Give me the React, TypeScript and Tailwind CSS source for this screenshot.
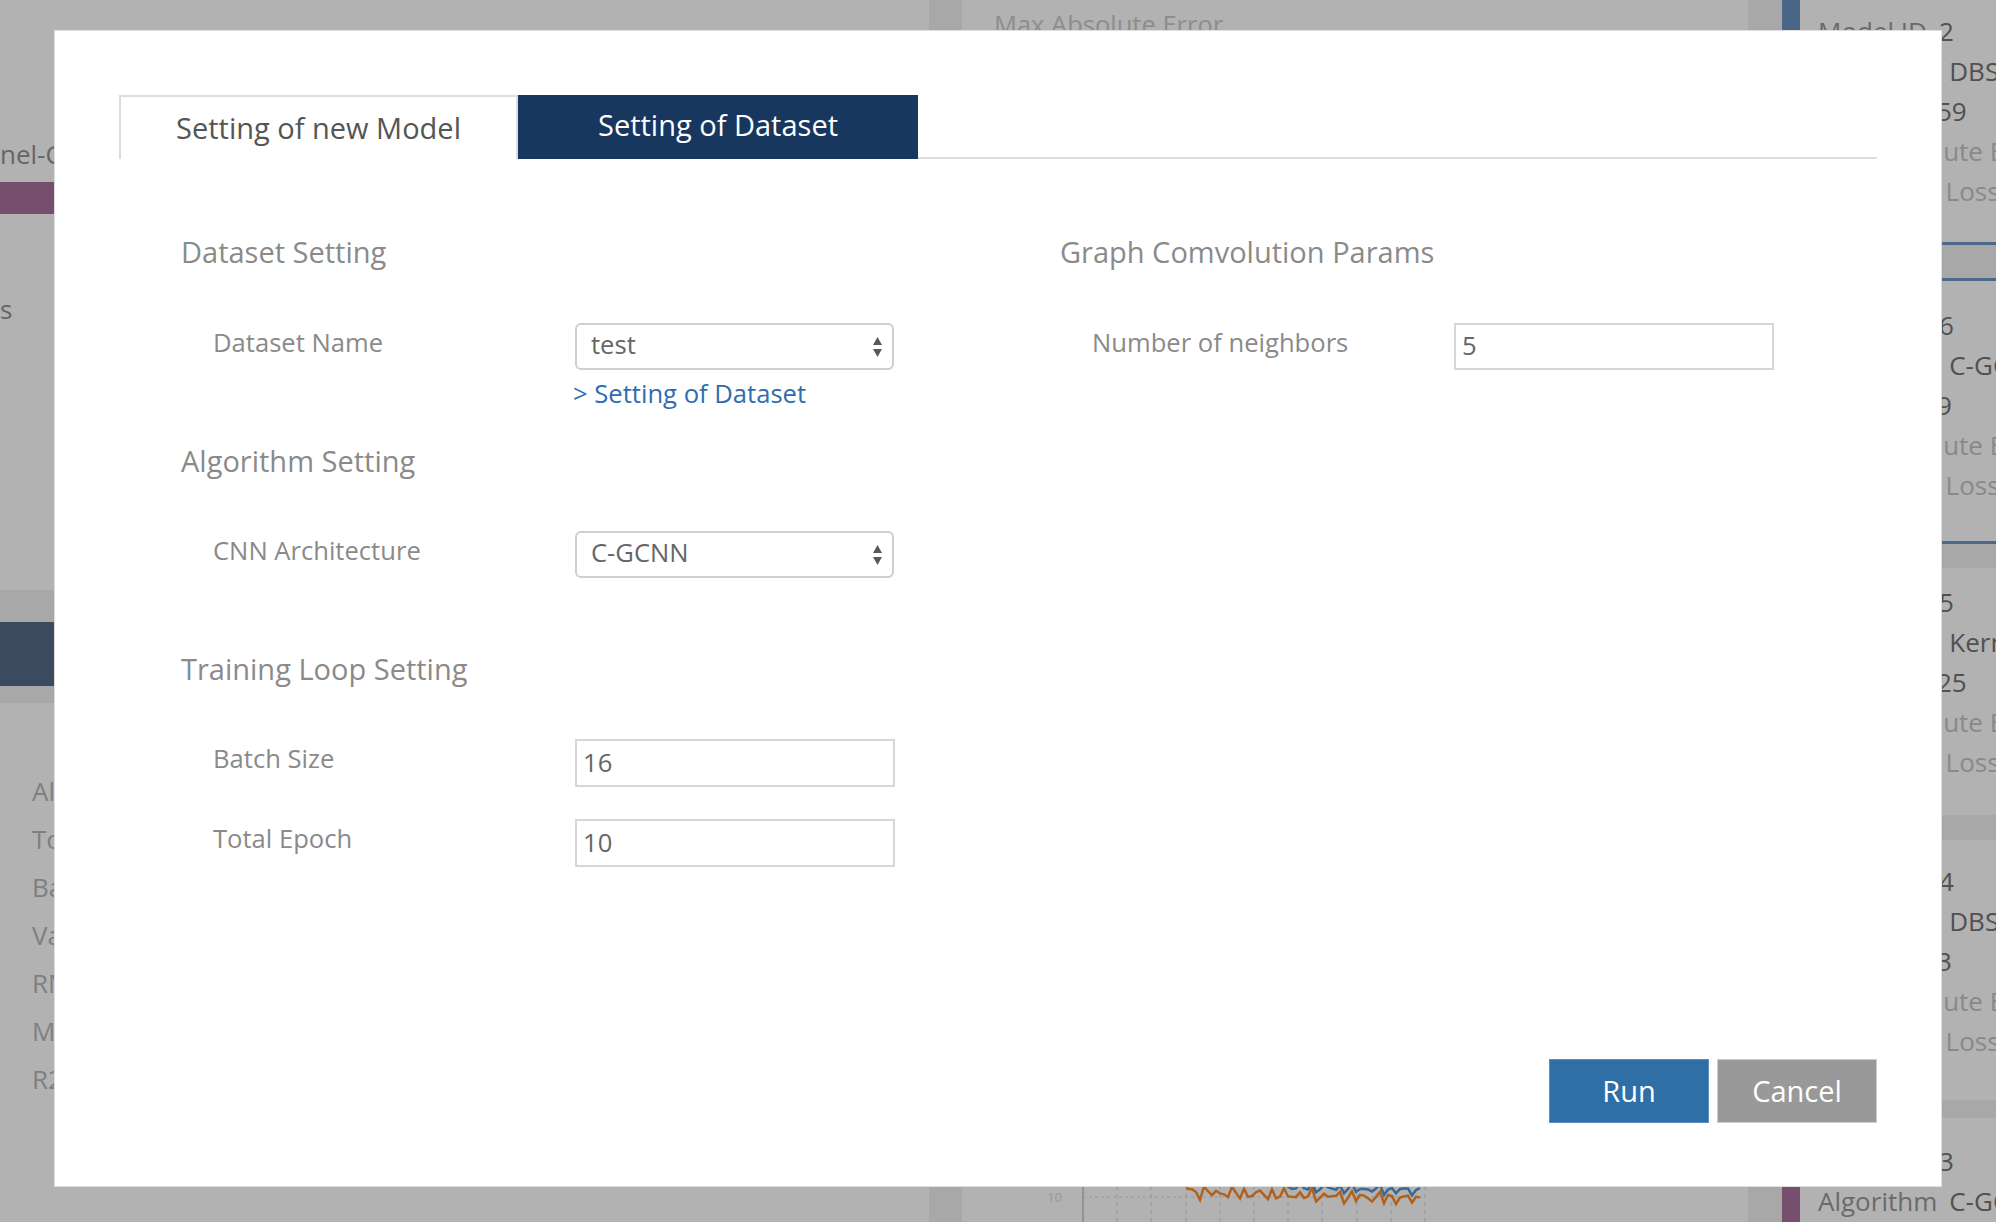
import React from 'react';

// jagged series for the training chart behind the dialog
const series = (x0: number, x1: number, step: number, f: (x: number, i: number) => number) => {
  const out: string[] = [];
  let i = 0;
  for (let x = x0; x <= x1; x += step, i++) out.push(`${x},${f(x, i).toFixed(1)}`);
  return out.join(' ');
};

const noise = (i: number, k: number) => 4 * Math.sin(i * 1.9 + k) + 3 * Math.sin(i * 3.7 + k * 2) + 1.5 * Math.sin(i * 7.3);

const orange = series(130, 458, 4, (x, i) => (x < 228 ? 110 + (x - 130) * 1.2 + noise(i, 1) : 230 + (x - 228) * 0.03 + noise(i, 1)));
const blue = series(150, 458, 4, (x, i) => (x < 330 ? 120 + (x - 150) * 0.58 + noise(i, 4) : 225 + (x - 330) * 0.03 + noise(i, 4) * 0.8));

const Card = ({
  bar,
  className,
  inner,
  rows,
}: {
  bar: string;
  className: string;
  inner: string;
  rows: [string, string, boolean?][];
}) => (
  <div className={`flex ${className}`}>
    <div className={`w-[18px] shrink-0 ${bar}`} />
    <div className={`flex-1 pl-[18px] ${inner}`}>
      {rows.map(([label, value, light]) => (
        <div key={label} className="flex gap-[12px] leading-[40px] text-[26px] whitespace-nowrap">
          <span className={`min-w-[107px] ${light ? 'text-[#c5c5c5]' : 'text-[#999]'}`}>{label}</span>
          <span className="text-[#747474]">{value}</span>
        </div>
      ))}
    </div>
  </div>
);

const Arrows = () => (
  <svg width="11" height="22" viewBox="0 0 11 22">
    <path d="M5.5 1 L10 9 H1 Z" fill="#5a5a5a" />
    <path d="M5.5 21 L10 13 H1 Z" fill="#5a5a5a" />
  </svg>
);

const Select = ({ value }: { value: string }) => (
  <div className="w-[319px] h-[47px] border-2 border-[#cfcfcf] rounded-[6px] bg-white flex items-center justify-between pl-[14px] pr-[9px]">
    <span className="pb-[3px] text-[25.6px] text-[#666]">{value}</span>
    <Arrows />
  </div>
);

const Input = ({ value, h = 'h-[48px]' }: { value: string; h?: string }) => (
  <div className={`w-[320px] ${h} border-2 border-[#d6d6d6] bg-white flex items-center pl-[6px]`}>
    <span className="text-[25.6px] text-[#666]">{value}</span>
  </div>
);

const Field = ({ label, children, className = '' }: { label: string; children: React.ReactNode; className?: string }) => (
  <div className={`flex items-start ${className}`}>
    <div className="w-[394px] pl-8 text-[25.6px] leading-[40px] text-[#8a8a8a]">{label}</div>
    {children}
  </div>
);

const Heading = ({ children, className = '' }: { children: React.ReactNode; className?: string }) => (
  <div className={`text-[29px] leading-[40px] text-[#8a8a8a] ${className}`}>{children}</div>
);

export default function App() {
  return (
    <div className="relative w-screen h-screen overflow-hidden bg-white font-['Open_Sans',sans-serif]">
      {/* page behind the dialog */}
      <div className="flex h-full">
        <div className="w-[929px] flex flex-col">
          <div className="mt-[134px] leading-[40px] text-[26px] text-[#929292] whitespace-nowrap">nel-CNN</div>
          <div className="mt-[8px] h-[32px] bg-[#a9729f]" />
          <div className="mt-[75px] leading-[40px] text-[26px] text-[#929292]">s</div>
          <div className="mt-[261px] h-[113px] bg-[#f1f1f1] pt-[32px]">
            <div className="h-[64px] bg-[#576b89]" />
          </div>
          <div className="mt-[64px] pl-8 text-[26px] leading-[48px] text-[#b7b7b7] whitespace-nowrap">
            <div>Algorithm</div>
            <div>Total Epoch</div>
            <div>Batch Size</div>
            <div>Validation Split</div>
            <div>RMSE</div>
            <div>MAE</div>
            <div>R2 Score</div>
          </div>
        </div>
        <div className="w-[33px] bg-[#f1f1f1]" />
        <div className="w-[786px] flex flex-col">
          <div className="mt-[4px] pl-8 text-[25.5px] leading-[40px] text-[#cbcbcb] whitespace-nowrap">Max Absolute Error</div>
          <div className="flex-1" />
          <svg width="786" height="260" viewBox="0 0 786 260">
            <line x1="121" y1="0" x2="121" y2="260" stroke="#c2c2c2" strokeWidth="1.5" />
            {[155, 189, 224, 258, 292, 326, 360, 395, 429, 463].map((x) => (
              <line key={x} x1={x} y1="0" x2={x} y2="260" stroke="#dcdcdc" strokeWidth="1.2" strokeDasharray="4 4" />
            ))}
            <line x1="121" y1="235" x2="463" y2="235" stroke="#dcdcdc" strokeWidth="1.2" strokeDasharray="3 3" />
            <text x="100" y="240" textAnchor="end" fontSize="13" fill="#dbdbdb">10</text>
            <polyline points={orange} fill="none" stroke="#ff8c2a" strokeWidth="2.5" />
            <polyline points={blue} fill="none" stroke="#5695d6" strokeWidth="2.5" />
          </svg>
        </div>
        <div className="w-[34px] bg-[#f1f1f1]" />
        <div className="flex-1 flex flex-col overflow-hidden">
          <Card
            bar="bg-[#6a92c1]"
            className="border-b-[3px] border-[#6e97c5]"
            inner="pt-[11px] pb-[31px]"
            rows={[
              ['Model ID', '2'],
              ['Algorithm', 'DBSCAN'],
              ['Epochs', '59'],
              ['Max Absolute Error', '1.42', true],
              ['Validation Loss', '0.31', true],
            ]}
          />
          <div className="h-[33px] bg-[#f1f1f1]" />
          <Card
            bar="bg-[#6a92c1]"
            className="border-y-[3px] border-[#6e97c5]"
            inner="pt-[24px] pb-[36px]"
            rows={[
              ['Model ID', '6'],
              ['Algorithm', 'C-GCNN'],
              ['Epochs', '9'],
              ['Max Absolute Error', '1.17', true],
              ['Validation Loss', '0.28', true],
            ]}
          />
          <div className="h-[24px] bg-[#f1f1f1]" />
          <Card
            bar="bg-[#d9d9d9]"
            className=""
            inner="pt-[14px] pb-[33px]"
            rows={[
              ['Model ID', '5'],
              ['Algorithm', 'Kernel-CNN'],
              ['Epochs', '25'],
              ['Max Absolute Error', '1.30', true],
              ['Validation Loss', '0.35', true],
            ]}
          />
          <div className="h-[25px] bg-[#f1f1f1]" />
          <Card
            bar="bg-[#d9d9d9]"
            className=""
            inner="pt-[21px] pb-[39px]"
            rows={[
              ['Model ID', '4'],
              ['Algorithm', 'DBSCAN'],
              ['Epochs', '3'],
              ['Max Absolute Error', '1.51', true],
              ['Validation Loss', '0.40', true],
            ]}
          />
          <div className="h-[18px] bg-[#f1f1f1]" />
          <Card
            bar="bg-[#a9729f]"
            className="flex-1"
            inner="pt-[23px]"
            rows={[
              ['Model ID', '3'],
              ['Algorithm', 'C-GCNN'],
            ]}
          />
        </div>
      </div>

      {/* dimmed overlay + dialog */}
      <div className="absolute inset-0 bg-black/30">
        <div className="ml-[54px] mt-[30px] w-[1888px] h-[1157px] bg-white border border-[#dedede] flex flex-col px-16 pt-16 pb-[63px]">
          <div className="flex h-[64px] shrink-0">
            <div className="w-[399px] border-2 border-b-0 border-[#dddddd] bg-white flex items-center justify-center text-[29px] text-[#555]">
              Setting of new Model
            </div>
            <div className="w-[400px] bg-[#17375e] flex items-center justify-center pb-[4px] text-[29px] text-white">
              Setting of Dataset
            </div>
            <div className="flex-1 border-b-2 border-[#dddddd]" />
          </div>

          <div className="flex flex-1">
            <div className="w-1/2 pl-[62px] flex flex-col">
              <Heading className="mt-[73px]">Dataset Setting</Heading>
              <Field label="Dataset Name" className="mt-[51px]">
                <Select value="test" />
              </Field>
              <div className="ml-[392px] mt-[5px] text-[25.6px] leading-[38px] text-[#2f6db0]">&gt; Setting of Dataset</div>

              <Heading className="mt-[28px]">Algorithm Setting</Heading>
              <Field label="CNN Architecture" className="mt-[50px]">
                <Select value="C-GCNN" />
              </Field>

              <Heading className="mt-[71px]">Training Loop Setting</Heading>
              <Field label="Batch Size" className="mt-[50px]">
                <Input value="16" />
              </Field>
              <Field label="Total Epoch" className="mt-[32px]">
                <Input value="10" />
              </Field>
            </div>

            <div className="w-1/2 pl-[62px] flex flex-col">
              <Heading className="mt-[73px]">Graph Comvolution Params</Heading>
              <Field label="Number of neighbors" className="mt-[51px]">
                <Input value="5" h="h-[47px]" />
              </Field>
            </div>
          </div>

          <div className="flex justify-end gap-2 shrink-0">
            <button className="w-[160px] h-[64px] bg-[#306ea6] border border-[#5b8ec4] text-white text-[29px]">Run</button>
            <button className="w-[160px] h-[64px] bg-[#999999] border border-[#cccccc] text-white text-[29px]">Cancel</button>
          </div>
        </div>
      </div>
    </div>
  );
}
